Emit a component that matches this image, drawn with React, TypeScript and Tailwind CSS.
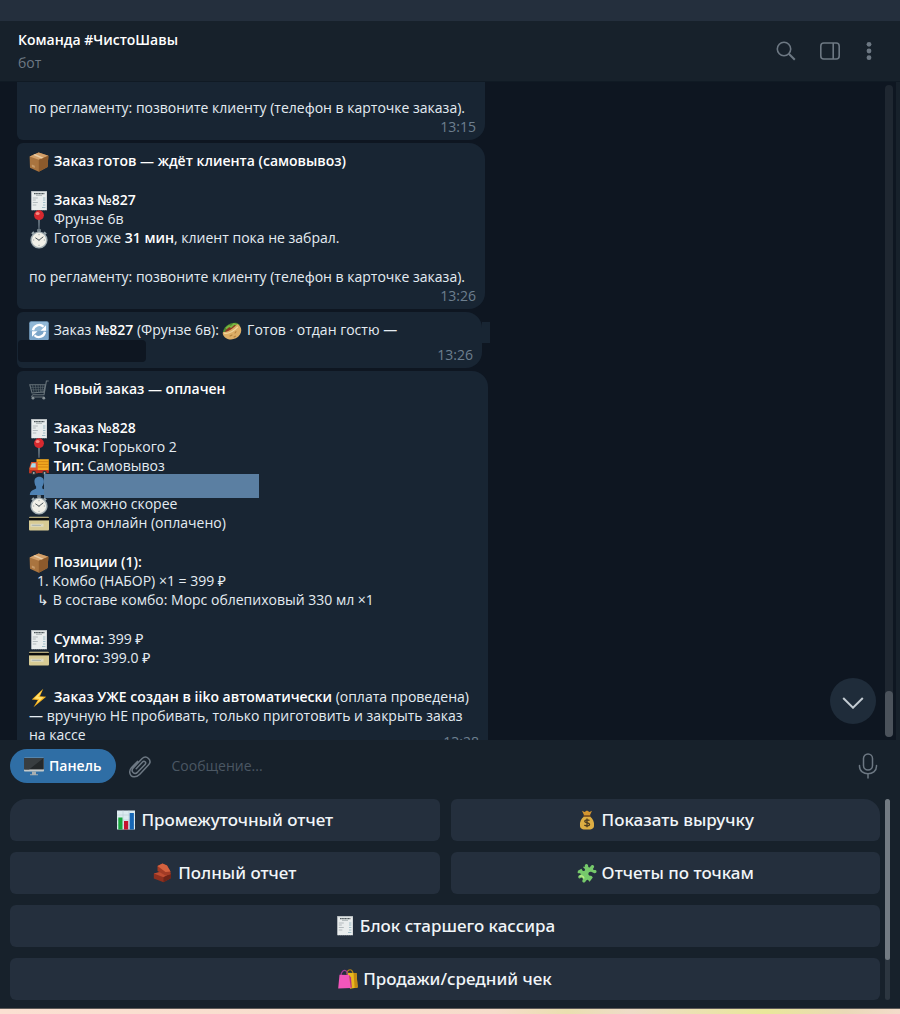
import React from 'react';

type EmojiName =
  | 'box'
  | 'receipt'
  | 'pin'
  | 'stopwatch'
  | 'refresh'
  | 'pita'
  | 'cart'
  | 'truck'
  | 'person'
  | 'card'
  | 'bolt'
  | 'desktop'
  | 'chart'
  | 'money'
  | 'bricks'
  | 'puzzle'
  | 'bags';

const drawings: Record<EmojiName, React.ReactNode> = {
  box: (
    <>
      <path d="M.6 4.6 9.6.4 19.4 3.8 18.6 15 9.8 19.8 1 15.8Z" fill="#a9743f" />
      <path d="M.6 4.6 9.6.4 19.4 3.8 9.8 7.8Z" fill="#d3a06a" />
      <path d="M9.8 7.8 19.4 3.8 18.6 15 9.8 19.8Z" fill="#8c5a2c" />
      <path d="m4.2 2.9 1.8-.8 8.6 3.6-2 .8Z" fill="#e9cda6" />
      <path d="m2.8 12.4 3 1.3v2.4l-3-1.3Z" fill="#c79a68" />
    </>
  ),
  receipt: (
    <>
      <path d="M2.3.2h15.6v19.4l-1-.5-1 .5-1-.5-1 .5-1-.5-1 .5-1-.5-1 .5-1-.5-1 .5-1-.5-1 .5-1-.5-1 .5-1-.5-.6.5Z" fill="#e9eded" />
      <path d="M2.3.2h15.6v1H2.3Z" fill="#b9c0c2" />
      <path d="M5 2.6h10.4" stroke="#4e575b" strokeWidth="1.4" strokeDasharray="1.3 .3" />
      <path d="M7 4.3h6" stroke="#9aa3a6" strokeWidth=".8" />
      <path d="M3.8 7h5M3.8 9h3M3.8 11.5h5M3.8 14h3.5" stroke="#a4adb1" strokeWidth=".8" />
      <path d="M14 7h2.4M14 9h2.4M14 11.5h2.4M14 14h2.4M13 16.5h3.4" stroke="#8fb3bf" strokeWidth=".8" />
    </>
  ),
  pin: (
    <>
      <path d="M9.3 9h1.4l-.3 10.8h-.8Z" fill="#8b9aa5" />
      <circle cx="10" cy="5.2" r="4.9" fill="#d8292f" />
      <ellipse cx="8.6" cy="3.5" rx="2" ry="1.5" fill="#f58a82" />
    </>
  ),
  stopwatch: (
    <>
      <rect x="8" y="0" width="4" height="3" rx=".8" fill="#707e86" />
      <path d="m15 3.1 2.1 2M3 5l2-2" stroke="#9aa8ad" strokeWidth="2" />
      <circle cx="10" cy="11" r="8.6" fill="#a2aeb2" />
      <circle cx="10" cy="11" r="7.2" fill="#f1f0e8" />
      <path d="m10 11.2 4-3.2M10 11.2 6.7 9" stroke="#4d575c" strokeWidth="1" strokeLinecap="round" />
      <path d="M10 4.9v1.3M10 15.8v1.3M3.9 11h1.3M14.8 11h1.3" stroke="#8b9699" strokeWidth=".8" />
    </>
  ),
  refresh: (
    <>
      <rect x=".2" y=".2" width="19.6" height="19.6" rx="2" fill="#7ba5c8" />
      <rect x="1" y="1" width="18" height="9" rx="1.5" fill="#91b8d6" />
      <path d="M4 9.2A6.2 6.2 0 0 1 14.5 5.8M16 10.8A6.2 6.2 0 0 1 5.5 14.2" fill="none" stroke="#fff" strokeWidth="2.3" />
      <path d="M17 4.2v5.5h-5.5ZM3 15.8v-5.5h5.5Z" fill="#fff" />
    </>
  ),
  pita: (
    <>
      <path d="M1 12C1 6 8 1 15 2l3 2-13 11Z" fill="#4f8a2f" />
      <path d="M3 11C5 6 10 3.5 15.5 3.5L16 7 6 14Z" fill="#8e3524" />
      <path d="M4 7.5 7 5l2 1 3-3 3 1" fill="none" stroke="#79b541" strokeWidth="1.8" />
      <path d="M1 11c4 .5 10-3.3 14.6-8C19.2 5 20.4 9.6 18 13.6 14.5 19.2 6.6 19.6 3 16.4.8 14.8.4 12.5 1 11Z" fill="#dcae66" />
      <path d="M2 12.2c4.6.6 10-2.4 13.8-6.4" fill="none" stroke="#f2d79d" strokeWidth="1.2" />
      <path d="m8 15 2-1M13 12l1-1.4M12 16l1.4-.8" stroke="#b5803c" strokeWidth="1.1" strokeLinecap="round" />
    </>
  ),
  cart: (
    <>
      <path d="M19.7 1h-2.3L15 14.8H3.5M.8 4.7h15.5l-1.5 7.2L3 13Z" fill="none" stroke="#68747b" strokeWidth="1.1" />
      <path d="M3.5 4.7 5 12.5M6.3 4.7l1 7.7M9 4.7l.5 7.5M11.6 4.7V12M14 4.7 12.8 12M1.5 7.3h14M2.2 9.8h13" stroke="#59656c" strokeWidth=".7" />
      <path d="m3.5 14.8-1 2.2h12.8" fill="none" stroke="#68747b" />
      <circle cx="4" cy="18.2" r="1.4" fill="#858f95" />
      <circle cx="14.8" cy="18.2" r="1.4" fill="#858f95" />
    </>
  ),
  truck: (
    <>
      <path d="M7.5 2.2h12.3v11.6H7.5Z" fill="#f3a91f" />
      <path d="M8.5 4.7h11.3M8.5 7.4h11.3M8.5 10h11.3" stroke="#c97a10" strokeWidth=".8" />
      <path d="M2.2 5h6.5v11.2H.3v-5Z" fill="#e3562c" />
      <path d="M2.9 6.2h3.8v4.4H1.4Z" fill="#a9dcec" />
      <path d="M.3 13h19.5v3H.3Z" fill="#bd2e20" />
      <circle cx="4.8" cy="16" r="2.3" fill="#30373b" />
      <circle cx="15.6" cy="16" r="2.3" fill="#30373b" />
      <circle cx="4.8" cy="16" r=".9" fill="#aab2b6" />
      <circle cx="15.6" cy="16" r=".9" fill="#aab2b6" />
    </>
  ),
  person: (
    <path d="M10.2.8c3.4 0 5 2.4 4.7 5.4-.2 2-.9 3.2-1.6 4.2v2c2.5 1.4 6 2 6.3 6.6H.8c.2-4.6 3.9-5.2 6.3-6.6v-2C6.2 9.4 5.7 8.2 5.5 6.2 5.2 3.2 6.8.8 10.2.8Z" fill="#4f82b3" />
  ),
  card: (
    <>
      <rect x="0" y="2.8" width="20" height="13.8" rx="1" fill="#d7cb94" />
      <path d="M0 3.8h20v2.6H0Z" fill="#0b0d0e" />
      <path d="M1.5 9.8h13v3h-13Z" fill="#dedac0" />
      <path d="m3 11.8 1-1 1 1 1-1 1 1 1-1 1 1 1-1 1 1 1-1" fill="none" stroke="#8295a1" strokeWidth=".7" />
    </>
  ),
  bolt: (
    <>
      <path d="M14.3.8 2.8 11.5l6 .4-4.3 7.3L17.2 8.7l-6.3-.5Z" fill="#f9b51f" />
      <path d="M13 2.5 5 10.5l5.3.5-2.7 4.2 7-6-5.4-.3Z" fill="#ffe170" />
    </>
  ),
  desktop: (
    <>
      <rect x="0" y="1.8" width="20" height="13.7" rx=".8" fill="#c3c9ca" />
      <path d="M.2 2h19.6v11.4H.2Z" fill="#24282a" />
      <path d="M.2 2h19.6L5 13.4H.2Z" fill="#383d40" />
      <path d="M8 15.5h4v2.7h2v1H6v-1h2Z" fill="#a8afb1" />
    </>
  ),
  chart: (
    <>
      <rect x="1" y=".5" width="18" height="19" fill="#dcebf0" />
      <path d="M1 5h18M1 10h18M1 15h18M7 .5v19M13 .5v19" stroke="#b9ccd5" strokeWidth=".6" />
      <path d="M2.3 7.5h4.2v12H2.3Z" fill="#18a63d" />
      <path d="M8 11h4.2v8.5H8Z" fill="#c4122f" />
      <path d="M13.7 3h4.2v16.5h-4.2Z" fill="#1767b5" />
    </>
  ),
  money: (
    <>
      <path d="M5 .8 7.5 2 10 .6 12.5 2 15 .8l-2.2 4.7H7.2Z" fill="#d3952f" />
      <path d="M7 6.5C4.2 8.5 2.5 12 3 16c.3 2.6 2 3.6 7 3.6s6.7-1 7-3.6c.5-4-1.2-7.5-4-9.5Z" fill="#ddae43" />
      <path d="M6.6 5.2h6.8v1.7H6.6Z" fill="#8b5821" />
      <path d="M12.5 10.5c-1-1-4.8-1-4.8.8 0 2 4.9.9 4.9 3.1 0 1.9-4 1.9-5.2.6M10 8.5v8.7" fill="none" stroke="#4c3b20" strokeWidth="1.3" />
    </>
  ),
  bricks: (
    <>
      <path d="M.8 10.5 9 8.5l8.8 2v4.7l-7.3 4L.8 15.5Z" fill="#8e301f" />
      <path d="M.8 10.5 9 8.5l8.8 2-7.3 3.7Z" fill="#bd4c31" />
      <path d="m10.5 14.2 7.3-3.7v4.7l-7.3 4Z" fill="#6d2418" />
      <path d="M4.5 3 9.5.6l4.5 2 3.5 6v3l-5 1L4.5 8Z" fill="#a23b25" />
      <path d="M4.5 3 9.5.6l4.5 2 3.5 6-5 .4Z" fill="#d4623f" />
    </>
  ),
  puzzle: (
    <>
      <path d="M8 3.7c-1-2 1.5-3.5 2.8-2 .8 1-.1 2 .9 2.6.9.5 1.6-.4 2.1-1.4 1-2 4-.8 3.2 1.3-.4 1-1.3 1.3-.8 2.3.6 1 1.8.1 2.7.8 1.6 1.3-.1 3.7-2 2.8l-2.2-1c-2-1-4 .9-3.1 2.7.6 1.3 2.2.6 3.3 1.4l.9 1.3-3.2 4.3c-1-.3-1-2.2-2.6-1.9-1.5.3-1.2 2-2.6 2.6-1.5.5-2.7-1-1.9-2.3.6-1 .5-1.7-.3-2.2-1-.6-1.6.6-2.7.4-1.9-.4-1.5-3 .2-3.2 1.1-.1 1.3-.8.7-1.6-.8-.9-2 .1-2.8-.9l.3-2 3.5-1.9 1.1 1.8c.6 1 2.6.4 2.6-.9 0-1.2-1.6-1.5-2.1-3Z" fill="#76c96b" />
      <path d="M2.5 13.5c2-1.5 4 0 4.5 2" fill="none" stroke="#b8ed83" strokeWidth="1.5" />
    </>
  ),
  bags: (
    <>
      <path d="M9 5.5C8.5 1 12 .2 13.5 1.2 15 2.3 15 4 15.2 5.5" fill="none" stroke="#b98517" strokeWidth="1.2" />
      <path d="M9 3.7 18.5 4l1.2 14.5-7.7 1.2Z" fill="#e8b81c" />
      <path d="m15.5 4 3 0 1.2 14.5-3 .4Z" fill="#c58a12" />
      <path d="M3 7C3 2 6 1 7.5 1.6 9.3 2.3 9.5 5 9.5 7" fill="none" stroke="#9e3d90" strokeWidth="1.2" />
      <path d="M1.5 5.7 11 6l1.8 13L.2 19.6Z" fill="#f356bb" />
      <path d="m11 6 2 2.5.8 10-1 .6Z" fill="#b92c88" />
    </>
  ),
};

const Emoji: React.FC<{ name: EmojiName }> = ({ name }) => (
  <svg viewBox="0 0 20 20" className="-my-1 mr-px inline-block size-5 shrink-0 align-middle" aria-hidden="true">
    {drawings[name]}
  </svg>
);

type BubbleProps = {
  className: string;
  time: string;
  timeClassName?: string;
  children: React.ReactNode;
};

const Bubble: React.FC<BubbleProps> = ({ className, time, timeClassName = '', children }) => (
  <article className={`relative w-full rounded-l-md rounded-r-2xl bg-[#182533] px-3 pb-1 ${className}`}>
    <div className="flex flex-col gap-5">{children}</div>
    <time className={`-mr-[3px] block text-right text-[#6d7f8f] ${timeClassName}`}>{time}</time>
  </article>
);

const B: React.FC<{ children: React.ReactNode }> = ({ children }) => (
  <b className="font-semibold text-white">{children}</b>
);

type KeyProps = {
  icon: EmojiName;
  label: string;
  className?: string;
};

const Key: React.FC<KeyProps> = ({ icon, label, className = 'rounded-md' }) => (
  <button
    type="button"
    className={`flex h-[42px] items-center justify-center gap-1 bg-[#242f3d] font-['Noto_Sans','Open_Sans',sans-serif] text-[17px] font-medium text-[#f1f5f8] ${className}`}
  >
    <Emoji name={icon} />
    {label}
  </button>
);

const Header = () => (
  <header className="flex h-[61px] shrink-0 items-center justify-between border-b border-[#101a24] bg-[#17212b] pr-[26px] pl-[18px]">
    <div>
      <h1 className="text-sm leading-[23px] font-semibold text-white">Команда #ЧистоШавы</h1>
      <p className="text-sm leading-[23px] text-[#6d7883]">бот</p>
    </div>
    <div className="flex items-center gap-6 text-[#6d7883]">
      <button type="button" aria-label="Поиск">
        <svg viewBox="0 0 20 20" className="size-5" fill="none" stroke="currentColor" strokeWidth="1.6">
          <circle cx="8" cy="8" r="6.7" />
          <path d="m12.8 12.8 6 6" strokeWidth="2" />
        </svg>
      </button>
      <button type="button" aria-label="Боковая панель">
        <svg viewBox="0 0 20 20" className="size-5" fill="none" stroke="currentColor" strokeWidth="1.6">
          <rect x=".8" y="2" width="18.4" height="16" rx="3" />
          <path d="M13.2 2v16" />
        </svg>
      </button>
      <button type="button" aria-label="Меню">
        <svg viewBox="0 0 10 20" className="h-5 w-2.5" fill="currentColor">
          <circle cx="5" cy="3.3" r="2.4" />
          <circle cx="5" cy="10" r="2.4" />
          <circle cx="5" cy="16.7" r="2.4" />
        </svg>
      </button>
    </div>
  </header>
);

const Messages = () => (
  <div className="flex min-w-0 flex-1 flex-col items-start gap-[3px] overflow-hidden pl-[17px] text-sm leading-[19px] text-[#e4ecf2]">
    <Bubble className="max-w-[468px] rounded-tl-none rounded-tr-none pt-4" time="13:15">
      <p>по регламенту: позвоните клиенту (телефон в карточке заказа).</p>
    </Bubble>

    <Bubble className="max-w-[468px] pt-2" time="13:26">
      <p><Emoji name="box" /> <B>Заказ готов — ждёт клиента (самовывоз)</B></p>
      <div>
        <p><Emoji name="receipt" /> <B>Заказ №827</B></p>
        <p><Emoji name="pin" /> Фрунзе 6в</p>
        <p><Emoji name="stopwatch" /> Готов уже <B>31 мин</B>, клиент пока не забрал.</p>
      </div>
      <p>по регламенту: позвоните клиенту (телефон в карточке заказа).</p>
    </Bubble>

    <Bubble className="max-w-[465px] pt-2" time="13:26" timeClassName="pt-1.5">
      <p><Emoji name="refresh" /> Заказ <B>№827</B> (Фрунзе 6в): <Emoji name="pita" /> Готов · отдан гостю —</p>
      <span className="absolute bottom-1.5 left-px h-[22px] w-32 rounded-sm bg-[#0e1621]" />
      <span className="absolute top-2.5 left-full h-[21px] w-2 bg-[#182533]" />
    </Bubble>

    <Bubble className="max-w-[471px] pt-2" time="13:28" timeClassName="-mt-3">
      <p><Emoji name="cart" /> <B>Новый заказ — оплачен</B></p>
      <div>
        <p><Emoji name="receipt" /> <B>Заказ №828</B></p>
        <p><Emoji name="pin" /> <B>Точка:</B> Горького 2</p>
        <p><Emoji name="truck" /> <B>Тип:</B> Самовывоз</p>
        <p className="relative">
          <Emoji name="person" />
          <span className="absolute -top-px left-[15px] h-6 w-[215px] bg-[#5b7fa2]" />
        </p>
        <p><Emoji name="stopwatch" /> Как можно скорее</p>
        <p><Emoji name="card" /> Карта онлайн (оплачено)</p>
      </div>
      <div>
        <p><Emoji name="box" /> <B>Позиции (1):</B></p>
        <p className="pl-2">1. Комбо (НАБОР) ×1 = 399 ₽</p>
        <p className="pl-2">↳ В составе комбо: Морс облепиховый 330 мл ×1</p>
      </div>
      <div>
        <p><Emoji name="receipt" /> <B>Сумма:</B> 399 ₽</p>
        <p><Emoji name="card" /> <B>Итого:</B> 399.0 ₽</p>
      </div>
      <p>
        <Emoji name="bolt" /> <B>Заказ УЖЕ создан в iiko автоматически</B> (оплата проведена) — вручную НЕ пробивать,
        только приготовить и закрыть заказ на&nbsp;кассе
      </p>
    </Bubble>
  </div>
);

const Composer = () => (
  <form className="flex h-[51px] shrink-0 items-center pr-[22px] pl-2.5">
    <button type="button" className="flex h-[34px] items-center gap-1 rounded-full bg-[#2f6ea5] px-3.5 text-sm font-semibold text-white">
      <Emoji name="desktop" />
      Панель
    </button>
    <button type="button" aria-label="Прикрепить файл" className="ml-3 text-[#6d7883]">
      <svg viewBox="0 0 24 24" className="size-6" fill="none" stroke="currentColor" strokeWidth="1.5" strokeLinecap="round">
        <path d="M8.2 14.8 14.5 8c1.8-1.9 4.3.5 2.5 2.4l-7.3 7.7c-3.3 3.3-7.5-.8-4.5-4.2l8.7-9.1c4.6-4.4 10.8 1.6 6.5 6.3l-8.6 9.1c-3.6 3.7-9 3.6-10-1.4-.4-2.3.5-3.8 1.8-5.2L9.5 7.4" />
      </svg>
    </button>
    <input
      type="text"
      aria-label="Сообщение"
      placeholder="Сообщение..."
      className="ml-5 min-w-0 flex-1 bg-transparent text-sm text-white outline-none placeholder:text-[#4b5763]"
    />
    <button type="button" aria-label="Голосовое сообщение" className="text-[#6d7883]">
      <svg viewBox="0 0 20 26" className="h-[26px] w-5" fill="none" stroke="currentColor" strokeWidth="1.5" strokeLinecap="round">
        <rect x="5.5" y="1" width="9" height="16" rx="4.5" />
        <path d="M1.5 12.5v.8c0 10 17 10 17 0v-.8M10 21v4" />
      </svg>
    </button>
  </form>
);

const Keyboard = () => (
  <section className="flex gap-[5px] px-2.5 pt-2 pb-2">
    <div className="grid flex-1 grid-cols-2 gap-[11px]">
      <Key icon="chart" label="Промежуточный отчет" className="rounded-md rounded-tl-2xl" />
      <Key icon="money" label="Показать выручку" className="rounded-md rounded-tr-2xl" />
      <Key icon="bricks" label="Полный отчет" />
      <Key icon="puzzle" label="Отчеты по точкам" />
      <Key icon="receipt" label="Блок старшего кассира" className="col-span-2 rounded-md" />
      <Key icon="bags" label="Продажи/средний чек" className="col-span-2 rounded-md" />
    </div>
    <div className="w-[5px] rounded-full bg-[#2c3640]">
      <div className="h-4/5 rounded-full bg-[#737b83]" />
    </div>
  </section>
);

const App = () => (
  <div className="flex h-screen flex-col bg-[#17212b] font-['Open_Sans','Noto_Sans',sans-serif]">
    <div className="h-[21px] shrink-0 bg-[#242f3d]" />
    <Header />
    <main className="relative mr-1 flex min-h-0 flex-1 bg-[#0e1621]">
      <Messages />
      <div className="my-[3px] mr-[3px] flex w-2 flex-col justify-end rounded-full bg-[#1f2731]">
        <div className="h-[46px] rounded-full bg-[#4b525b]" />
      </div>
      <button
        type="button"
        aria-label="Вниз"
        className="absolute right-5 bottom-4 flex size-[46px] items-center justify-center rounded-full bg-[#1f2c3a] text-[#c3cbd2]"
      >
        <svg viewBox="0 0 22 12" className="mt-1 h-3 w-[22px]" fill="none" stroke="currentColor" strokeWidth="2">
          <path d="m1.2 1 9.8 9.7L20.8 1" />
        </svg>
      </button>
    </main>
    <Composer />
    <Keyboard />
    <div className="h-1.5 shrink-0 border-t border-[#5d5a58] bg-[linear-gradient(90deg,#fbe0d2_0%,#f6dccb_55%,#eadfb0_63%,#eedcc8_70%,#e9e79a_85%,#ead9b8_94%,#f3dccb_100%)]" />
  </div>
);

export default App;
